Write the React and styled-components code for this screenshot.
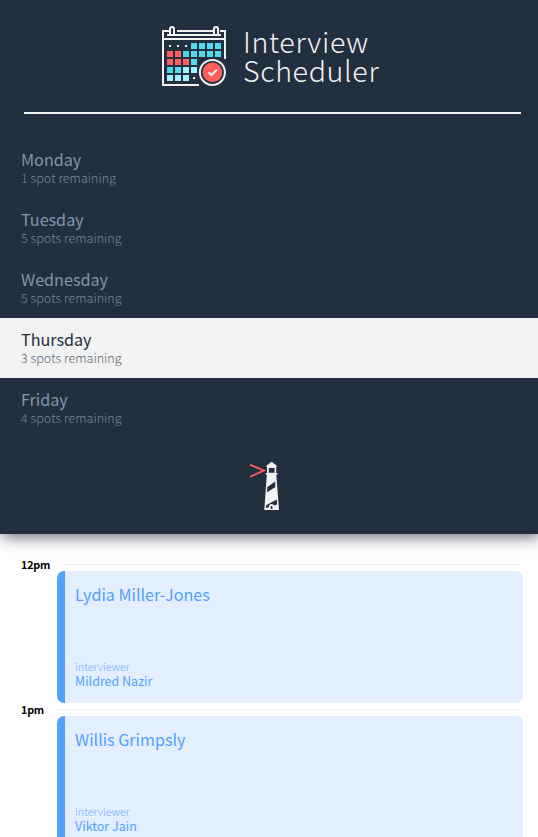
import React from "react";
import styled, { createGlobalStyle } from "styled-components";

const GlobalStyle = createGlobalStyle`
  * { box-sizing: border-box; }
  html, body { margin: 0; height: 100%; overflow: hidden; background: #fff; }
  body { font-family: "Source Sans Pro", "Noto Sans CJK SC", sans-serif; color: #000; }
  h1, h2, h3, h4, p, ul { margin: 0; padding: 0; font-weight: 400; }
`;

const Layout = styled.main`
  display: flex;
  flex-direction: column;
`;

const Sidebar = styled.section`
  position: relative;
  z-index: 1;
  height: 534px;
  flex: none;
  display: flex;
  flex-direction: column;
  background: #222f3e;
  box-shadow: 2px 2px 15px 0 rgba(34, 37, 62, 0.75);
`;

const Brand = styled.header`
  display: flex;
  align-items: flex-start;
  padding: 25px 0 0 161px;
  height: 112px;
`;

const BrandName = styled.h1`
  margin: 1px 0 0 16px;
  font-size: 28.6px;
  font-weight: 300;
  line-height: 29px;
  letter-spacing: 0.65px;
  color: #f2f2f2;
`;

const Separator = styled.hr`
  flex: none;
  width: auto;
  height: 2px;
  margin: 0 17px 24px 24px;
  border: 0;
  background: #f2f2f2;
`;

const DayList = styled.ul`
  list-style: none;
`;

const Day = styled.li`
  height: 60px;
  padding: 9px 21px 0;
  color: ${(p) => (p.$selected ? "#222f3e" : "#8395a7")};
  background: ${(p) => (p.$selected ? "#f2f2f2" : "transparent")};
`;

const DayName = styled.h2`
  font-size: 16.15px;
  line-height: 24px;
`;

const Spots = styled.h3`
  font-size: 12.5px;
  font-weight: 300;
  line-height: 14px;
  letter-spacing: 0.05px;
  color: ${(p) => (p.$selected ? "#576574" : "#78899a")};
`;

const Lighthouse = styled.svg`
  display: block;
  margin: 22px 0 0 248px;
`;

const Schedule = styled.section`
  display: flex;
  flex-direction: column;
  padding: 24px 15px 0 21px;
`;

const TimeRow = styled.header`
  display: flex;
  align-items: center;
  height: 13px;
  gap: 12px;
  font-size: 10.75px;
  font-weight: 700;
  line-height: 13px;
  letter-spacing: -0.2px;
`;

const Rule = styled.span`
  flex: 1;
  height: 1px;
  background: #f2f2f2;
`;

const Card = styled.div`
  display: flex;
  flex-direction: column;
  justify-content: space-between;
  height: 132px;
  margin-left: 36px;
  padding: 11px 10px 15px;
  border-left: 8px solid #54a0ff;
  border-radius: 7px;
  background: #e3effe;
  color: #54a0ff;
`;

const Student = styled.h2`
  font-size: 16.1px;
  line-height: 24px;
`;

const InterviewerLabel = styled.h4`
  font-size: 10.75px;
  font-weight: 300;
  line-height: 15px;
  color: #74b0fe;
`;

const Interviewer = styled.h3`
  font-size: 12.5px;
  line-height: 14px;
`;

const Slot = styled.article`
  display: flex;
  flex-direction: column;
`;

const DAYS = [
  ["Monday", "1 spot remaining"],
  ["Tuesday", "5 spots remaining"],
  ["Wednesday", "5 spots remaining"],
  ["Thursday", "3 spots remaining"],
  ["Friday", "4 spots remaining"],
];

const INTERVIEWS = [
  ["12pm", "Lydia Miller-Jones", "Mildred Nazir"],
  ["1pm", "Willis Grimpsly", "Viktor Jain"],
];

// One character per calendar cell: dot, red, blue, teal, pale.
const CELLS = ["...bbbb", "rrtbbbb", "rrrb", "tbpp", "ppp."];
const CELL_COLORS = { r: "#ff5e5e", b: "#54d9ee", t: "#4cd4e6", p: "#a3f1fb" };

function CalendarLogo() {
  return (
    <svg width="66" height="62" viewBox="0 0 66 62" fill="none">
      <g stroke="#f2f2f2" strokeWidth="2">
        <path d="M38 60H2V6H9M16 6H53M59 6H64V34" />
        <path d="M6 10H60M2 14H64" />
        <path d="M9 9V4a2 2 0 0 1 4 0V9M53 9V4a2 2 0 0 1 4 0V9" />
      </g>
      {CELLS.map((row, y) =>
        [...row].map((c, x) =>
          c === "." ? (
            <rect key={`${x}-${y}`} x={8 + x * 8} y={20 + y * 8} width="2" height="2" fill="#f2f2f2" />
          ) : (
            <rect key={`${x}-${y}`} x={6 + x * 8} y={18 + y * 8} width="6" height="6" fill={CELL_COLORS[c]} />
          )
        )
      )}
      <circle cx="51.4" cy="47.4" r="12.5" fill="#222f3e" stroke="#f2f2f2" strokeWidth="2" />
      <circle cx="51.4" cy="47.4" r="9.8" fill="#ff5e5e" />
      <path d="M47.4 47.2L50.4 50L56 44.6" stroke="#f2f2f2" strokeWidth="2" />
    </svg>
  );
}

function LighthouseLogo() {
  return (
    <Lighthouse width="34" height="52" viewBox="0 0 34 52">
      <path d="M2 4.6L16 10.6L2 16.8" fill="none" stroke="#ff5e5e" strokeWidth="1.8" />
      <path
        fill="#f2f2f2"
        fillRule="evenodd"
        d="M23.6 1.8L29.8 6.6H28.2V13H29.5V14.8H28.3L31 50H16.3L18.8 14.8H17.8V13H19V6.6H17.4ZM20.8 8V12.8H26.6V8Z"
      />
      <path fill="#222f3e" d="M19.4 27L27.2 21.6V27.2L19 32.3ZM18.2 45.2L28.7 39.4L29.1 44.4L18 48Z" />
      <path fill="#f2f2f2" d="M21 49V46.5a2.6 2.6 0 0 1 5.2 0V49Z" />
      <path fill="#222f3e" d="M22.7 49V47a0.9 0.9 0 0 1 1.8 0V49Z" />
    </Lighthouse>
  );
}

export default function App() {
  return (
    <Layout>
      <GlobalStyle />
      <Sidebar>
        <Brand>
          <CalendarLogo />
          <BrandName>
            Interview
            <br />
            Scheduler
          </BrandName>
        </Brand>
        <Separator />
        <DayList>
          {DAYS.map(([name, spots]) => {
            const selected = name === "Thursday";
            return (
              <Day key={name} $selected={selected}>
                <DayName>{name}</DayName>
                <Spots $selected={selected}>{spots}</Spots>
              </Day>
            );
          })}
        </DayList>
        <LighthouseLogo />
      </Sidebar>
      <Schedule>
        {INTERVIEWS.map(([time, student, interviewer]) => (
          <Slot key={time}>
            <TimeRow>
              {time}
              <Rule />
            </TimeRow>
            <Card>
              <Student>{student}</Student>
              <div>
                <InterviewerLabel>interviewer</InterviewerLabel>
                <Interviewer>{interviewer}</Interviewer>
              </div>
            </Card>
          </Slot>
        ))}
      </Schedule>
    </Layout>
  );
}
